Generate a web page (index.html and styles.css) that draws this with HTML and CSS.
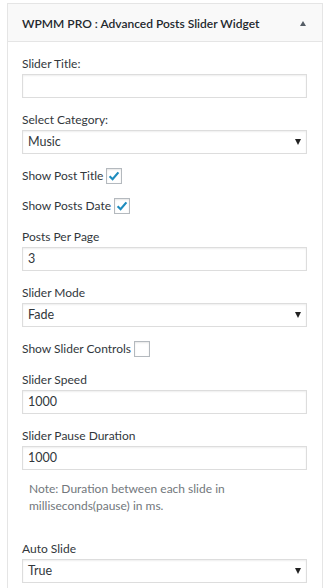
FILE: index.html
```html
<!DOCTYPE html>
<html>
<head>
<meta charset="utf-8">
<link rel="stylesheet" href="styles.css">
</head>
<body>
<div class="widget">
  <div class="widget-top">
    <h3 class="widget-title">WPMM PRO : Advanced Posts Slider Widget</h3>
    <span class="toggle"></span>
  </div>
  <div class="widget-inside">
    <div class="field">
      <label>Slider Title:</label>
      <div class="input"></div>
    </div>
    <div class="field">
      <label>Select Category:</label>
      <div class="input select">Music</div>
    </div>
    <div class="check-row">
      <span>Show Post Title</span>
      <span class="checkbox"><svg viewBox="0 0 14 14" width="14" height="14"><path d="M2.6 7.2 L5.6 10.2 L11.4 3.4" fill="none" stroke="#1e8cbe" stroke-width="2.2"/></svg></span>
    </div>
    <div class="check-row">
      <span>Show Posts Date</span>
      <span class="checkbox"><svg viewBox="0 0 14 14" width="14" height="14"><path d="M2.6 7.2 L5.6 10.2 L11.4 3.4" fill="none" stroke="#1e8cbe" stroke-width="2.2"/></svg></span>
    </div>
    <div class="field">
      <label>Posts Per Page</label>
      <div class="input">3</div>
    </div>
    <div class="field">
      <label>Slider Mode</label>
      <div class="input select">Fade</div>
    </div>
    <div class="check-row">
      <span>Show Slider Controls</span>
      <span class="checkbox"></span>
    </div>
    <div class="field">
      <label>Slider Speed</label>
      <div class="input">1000</div>
    </div>
    <div class="field">
      <label>Slider Pause Duration</label>
      <div class="input">1000</div>
    </div>
    <p class="note">Note: Duration between each slide in milliseconds(pause) in ms.</p>
    <div class="field auto">
      <label>Auto Slide</label>
      <div class="input select">True</div>
    </div>
  </div>
</div>
</body>
</html>
```
FILE: styles.css
```css
html, body {
  margin: 0;
  padding: 0;
  background: #fff;
}
body {
  font-family: Lato, "Open Sans", sans-serif;
  font-size: 12px;
  color: #32373c;
  padding: 3px 6px 0 7px;
  height: 585px;
  overflow: hidden;
}
.widget {
  border: 1px solid #e5e5e5;
  border-bottom: 0;
  background: #fff;
  height: 100%;
}
.widget-top {
  display: flex;
  align-items: center;
  justify-content: space-between;
  background: #f9f9f9;
  border-bottom: 1px solid #e5e5e5;
  padding: 1px 16px 0 14px;
  box-sizing: border-box;
  height: 38px;
}
.widget-title {
  margin: 0;
  font-size: 12px;
  font-weight: 600;
  color: #23282d;
}
.toggle {
  width: 0;
  height: 0;
  border-left: 3.5px solid transparent;
  border-right: 3.5px solid transparent;
  border-bottom: 5px solid #555d66;
}
.widget-inside {
  padding: 13px 15px 0 14px;
  display: flex;
  flex-direction: column;
}
.field {
  display: flex;
  flex-direction: column;
  margin-top: 13px;
}
.field:first-child {
  margin-top: 0;
}
.field label {
  line-height: 18px;
  margin-bottom: 1px;
}
.input {
  height: 22px;
  border: 1px solid #ddd;
  box-shadow: inset 0 1px 2px rgba(0,0,0,0.07);
  line-height: 22px;
  padding: 0 5px;
  font-size: 12.5px;
  color: #32373c;
}
.select {
  position: relative;
}
.select::after {
  content: "";
  position: absolute;
  right: 5px;
  top: 8px;
  border-left: 3.5px solid transparent;
  border-right: 3.5px solid transparent;
  border-top: 6px solid #222;
}
.check-row {
  display: flex;
  align-items: center;
  gap: 3px;
  margin-top: 13px;
  height: 18px;
  line-height: 18px;
}
.check-row + .check-row {
  margin-top: 12px;
}
.check-row + .field {
  margin-top: 13px;
}
.checkbox {
  width: 14px;
  height: 14px;
  border: 1px solid #b4b9be;
  display: flex;
  align-items: center;
  justify-content: center;
  box-shadow: inset 0 1px 2px rgba(0,0,0,0.1);
}
.note {
  margin: 10px 0 0 7px;
  color: #72777c;
  line-height: 17px;
  width: 230px;
}
.field.auto {
  margin-top: 26px;
}
```
